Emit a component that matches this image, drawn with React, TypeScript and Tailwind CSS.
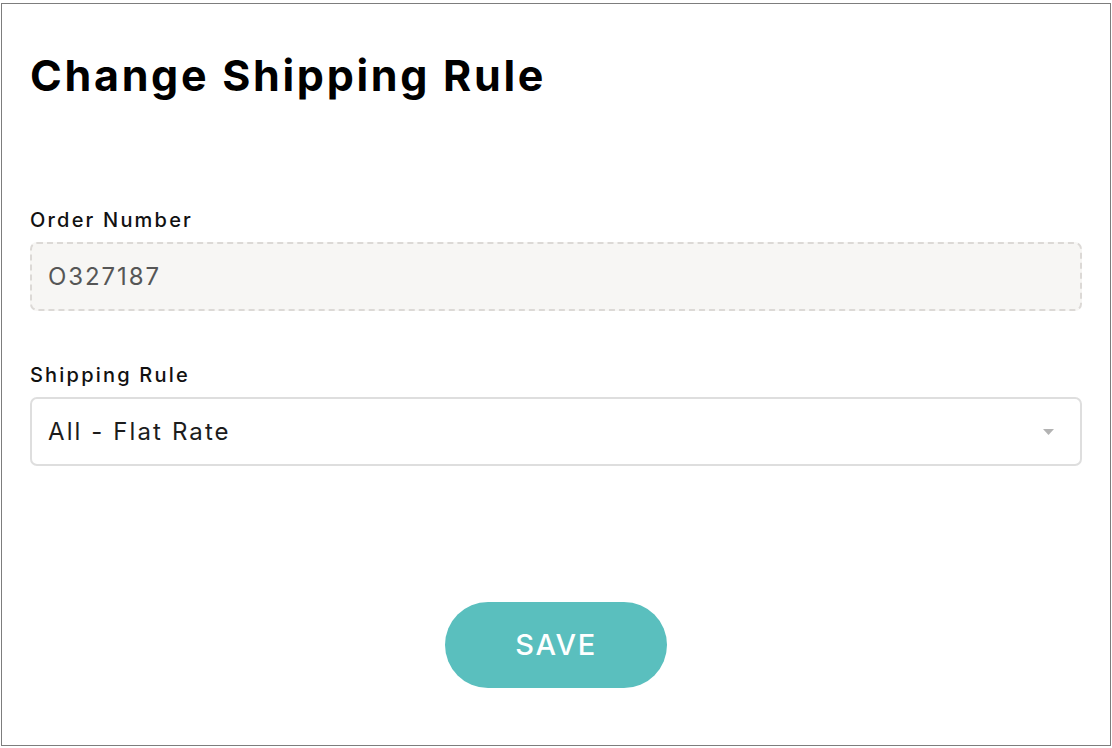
const FONT = { fontFamily: "Inter, 'Open Sans', sans-serif" };

function Field({ label, children }: { label: string; children: React.ReactNode }) {
  return (
    <div className="flex flex-col">
      <label className="text-[20px] leading-[24px] font-medium text-[#111] tracking-[2.2px]">
        {label}
      </label>
      <div className="mt-[10px]">{children}</div>
    </div>
  );
}

export default function App() {
  return (
    <div className="w-[1112px] h-[748px] bg-white pt-[3px] pl-[1px]" style={FONT}>
      <div className="w-[1110px] h-[743px] border border-[#7d7d7d] flex flex-col px-[28px]">
        <h1 className="mt-[46px] text-[43px] leading-[50px] font-bold text-black tracking-[2.7px]">
          Change Shipping Rule
        </h1>

        <div className="mt-[108px] flex flex-col gap-[52px]">
          <Field label="Order Number">
            <div className="h-[69px] rounded-[7px] border-2 border-dashed border-[#dcd9d6] bg-[#f7f6f4] flex items-center px-[16px]">
              <span className="text-[24px] text-[#565656] tracking-[1.9px]">O327187</span>
            </div>
          </Field>

          <Field label="Shipping Rule">
            <div className="h-[69px] rounded-[7px] border-2 border-[#dedede] bg-white flex items-center justify-between pl-[16px] pr-[26px]">
              <span className="text-[24px] text-[#1c1c1c] tracking-[2.1px]">All - Flat Rate</span>
              <svg width="11" height="6" viewBox="0 0 11 6">
                <path d="M0 0 L11 0 L5.5 6 Z" fill="#b3b3b3" />
              </svg>
            </div>
          </Field>
        </div>

        <div className="flex-1 flex items-end justify-center pb-[57px]">
          <button className="w-[222px] h-[86px] rounded-full bg-[#5abfbe] text-white text-[29px] font-medium tracking-[1.6px]">
            SAVE
          </button>
        </div>
      </div>
    </div>
  );
}
